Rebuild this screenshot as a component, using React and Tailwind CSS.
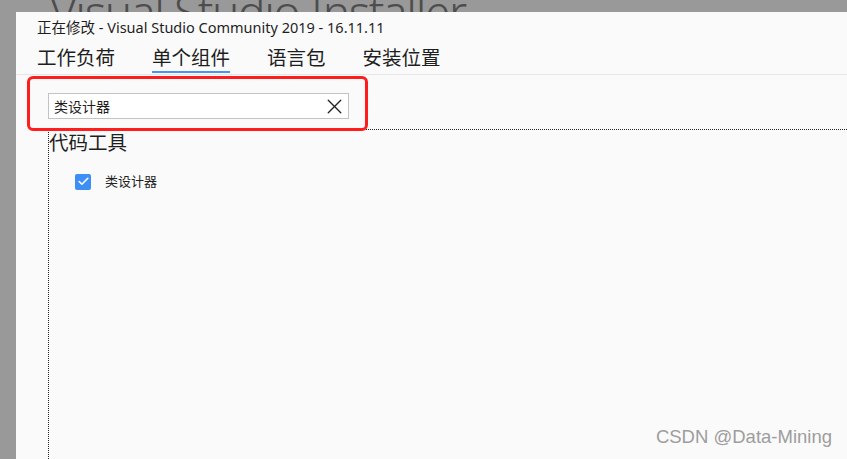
import { X, Check } from "lucide-react";

const ui = { fontFamily: '"Noto Sans", "Noto Sans CJK SC", sans-serif' };

const tabs = ["工作负荷", "单个组件", "语言包", "安装位置"];

export default function App() {
  return (
    <div className="relative w-[847px] h-[459px] overflow-hidden bg-[#999999]" style={ui}>
      {/* installer window title behind the dialog */}
      <div className="absolute left-[50px] top-[-12px] text-[46px] font-light leading-none tracking-[-1.4px] text-[#4d4d4d] whitespace-nowrap">
        Visual Studio Installer
      </div>

      <div className="relative flex h-full pl-[16px] pt-[12px]">
        <div className="flex flex-1 flex-col bg-[#fafafa]">
          <div className="pl-[21px] pt-[5px] text-[14.5px] leading-[20px] text-[#1e1e1e]">
            正在修改 - Visual Studio Community 2019 - 16.11.11
          </div>

          <div className="flex gap-[37px] pl-[21px] pt-[8px] pb-[1px] border-b border-[#e6e6e6]">
            {tabs.map((t, i) => (
              <div key={t} className="flex flex-col">
                <span className="text-[19.5px] leading-[26px] text-[#1e1e1e]">{t}</span>
                <span className={i === 1 ? "h-[2px] bg-[#4b93f1]" : "h-[2px]"} />
              </div>
            ))}
          </div>

          <div className="pl-[32px] pt-[18px] pb-[10px]">
            <div className="flex h-[26px] w-[301px] items-center justify-between border border-[#c3c3c3] bg-white pl-[5px] pr-[1px]">
              <span className="text-[14px] text-[#1e1e1e]">类设计器</span>
              <X size={25} strokeWidth={1.3} className="text-[#222]" />
            </div>
          </div>

          <div className="ml-[32px] flex-1 border-l border-t border-dotted border-[#222]">
            <div className="text-[19.5px] leading-[26px] text-[#1e1e1e]">代码工具</div>
            <div className="flex items-center gap-[14px] pl-[26px] pt-[16px]">
              <span className="flex h-[16px] w-[16px] items-center justify-center rounded-[2px] bg-[#3d8ef5]">
                <Check size={13} strokeWidth={3} className="text-white" />
              </span>
              <span className="text-[13px] text-[#222]">类设计器</span>
            </div>
          </div>
        </div>
      </div>

      {/* red annotation around the search box */}
      <div className="absolute left-[27px] top-[76px] h-[55px] w-[341px] rounded-[6px] border-[3px] border-[#fe1c1c]" />

      <div
        className="absolute right-[15px] bottom-[8px] text-[18.5px] text-[#9d9d9d]"
        style={{ fontFamily: '"Liberation Sans", Arial, sans-serif' }}
      >
        CSDN @Data-Mining
      </div>
    </div>
  );
}
